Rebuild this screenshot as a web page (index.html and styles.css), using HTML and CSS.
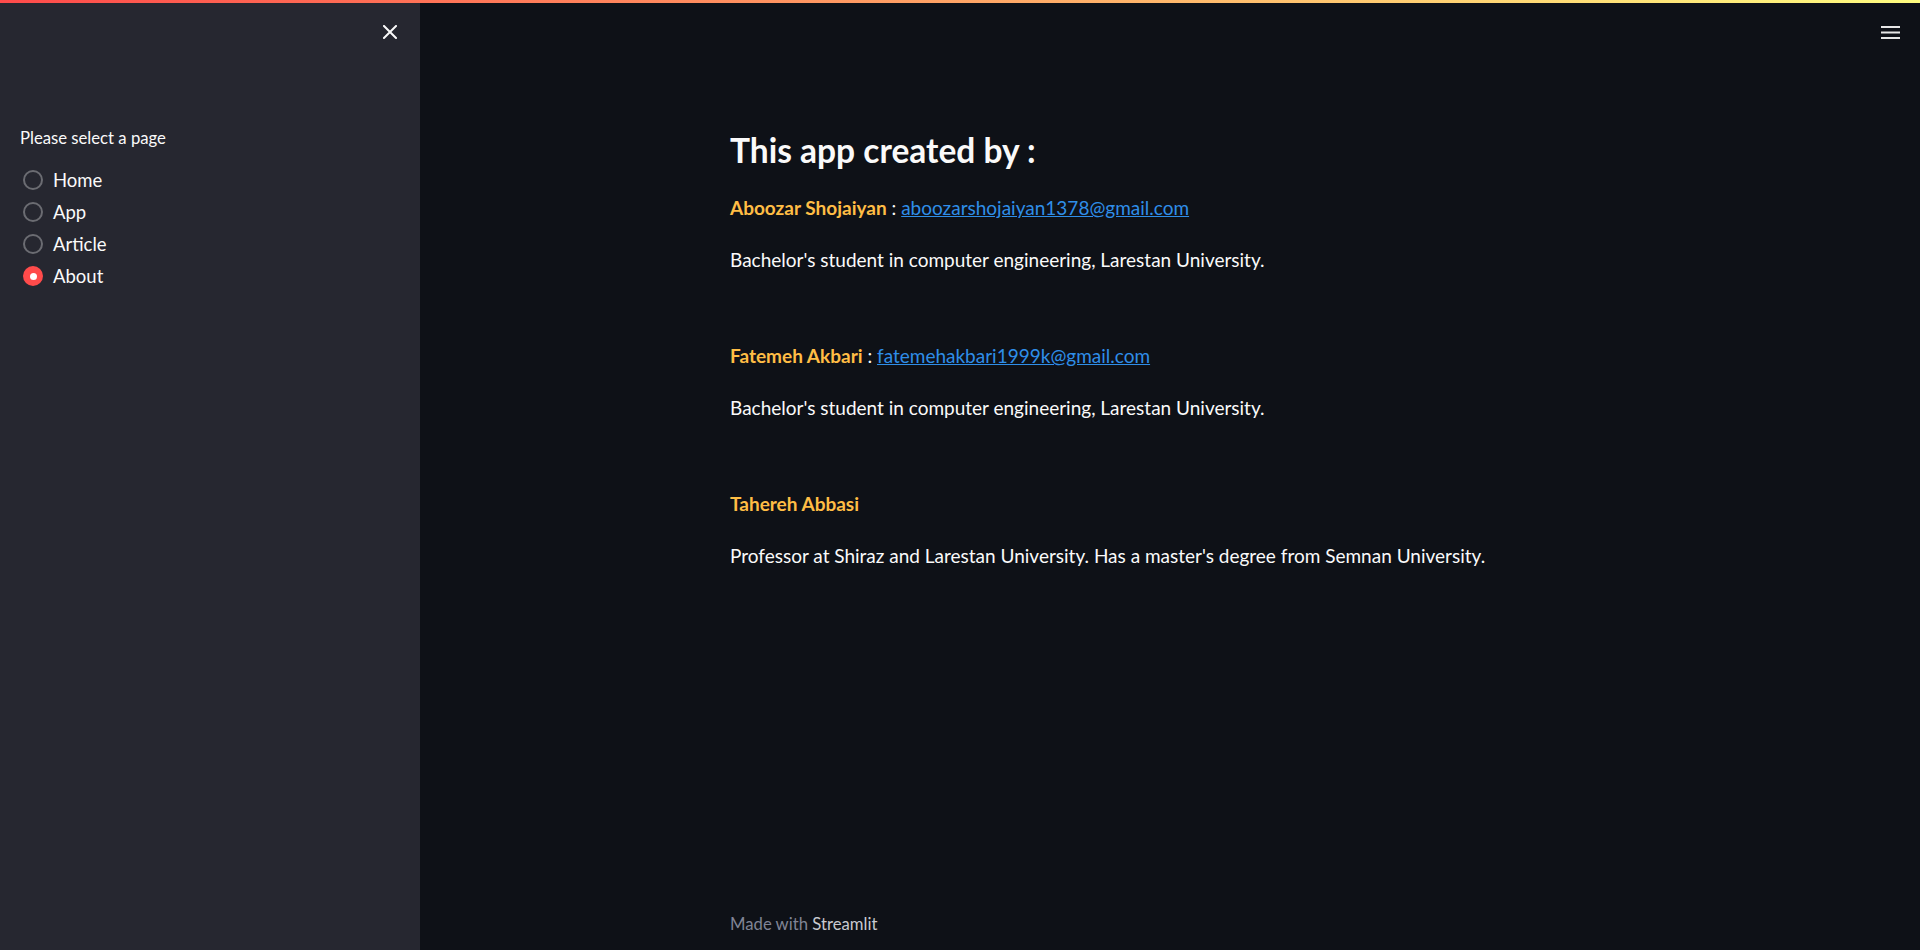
FILE: index.html
```html
<!DOCTYPE html>
<html lang="en">
<head>
<meta charset="utf-8">
<title>About</title>
<link rel="stylesheet" href="styles.css">
</head>
<body>
<div class="decoration"></div>
<div class="app">
  <aside class="sidebar">
    <div class="sb-head">
      <button class="close-btn" aria-label="Close sidebar">
        <svg width="14" height="14" viewBox="0 0 14 14"><path d="M1 1L13 13M13 1L1 13" stroke="#fafafa" stroke-width="2" stroke-linecap="square"/></svg>
      </button>
    </div>
    <div class="sb-body">
      <div class="radio-label">Please select a page</div>
      <div class="radio-group">
        <label class="radio"><span class="dot"></span><span class="txt">Home</span></label>
        <label class="radio"><span class="dot"></span><span class="txt">App</span></label>
        <label class="radio"><span class="dot"></span><span class="txt">Article</span></label>
        <label class="radio checked"><span class="dot"></span><span class="txt">About</span></label>
      </div>
    </div>
  </aside>
  <main class="main">
    <div class="topbar">
      <button class="menu-btn" aria-label="Menu">
        <svg width="19" height="13" viewBox="0 0 19 13"><rect x="0" y="0" width="19" height="2" fill="#e6e6e6"/><rect x="0" y="5.5" width="19" height="2" fill="#e6e6e6"/><rect x="0" y="11" width="19" height="2" fill="#e6e6e6"/></svg>
      </button>
    </div>
    <div class="block">
      <h2 class="title">This app created by :</h2>
      <p class="line"><span class="name">Aboozar Shojaiyan</span> : <a class="mail" href="#">aboozarshojaiyan1378@gmail.com</a></p>
      <p class="line desc">Bachelor's student in computer engineering, Larestan University.</p>
      <p class="line"><span class="name">Fatemeh Akbari</span> : <a class="mail" href="#">fatemehakbari1999k@gmail.com</a></p>
      <p class="line desc">Bachelor's student in computer engineering, Larestan University.</p>
      <p class="line"><span class="name">Tahereh Abbasi</span></p>
      <p class="line desc">Professor at Shiraz and Larestan University. Has a master's degree from Semnan University.</p>
    </div>
    <footer class="footer">Made with <span class="brand">Streamlit</span></footer>
  </main>
</div>
</body>
</html>
```
FILE: styles.css
```css
html, body {
  margin: 0;
  padding: 0;
  height: 100%;
  background: #0e1117;
  font-family: "Lato", "Noto Sans", sans-serif;
  color: #fafafa;
  overflow: hidden;
}
.decoration {
  height: 3px;
  background: linear-gradient(90deg, #ff4b4b, #fffd80);
}
.app {
  display: flex;
  height: 947px;
}
.sidebar {
  width: 420px;
  flex: none;
  background: #262730;
  display: flex;
  flex-direction: column;
}
.sb-head {
  height: 58px;
  display: flex;
  justify-content: flex-end;
  align-items: center;
  padding-right: 23px;
}
.close-btn, .menu-btn {
  background: none;
  border: 0;
  padding: 0;
  display: flex;
  cursor: pointer;
}
.sb-body {
  padding: 67px 20px 0 20px;
}
.radio-label {
  font-size: 16.7px;
  line-height: 20px;
  margin-bottom: 16px;
}
.radio-group {
  display: flex;
  flex-direction: column;
}
.radio {
  display: flex;
  align-items: center;
  height: 32px;
  font-size: 18.5px;
}
.dot {
  width: 20px;
  height: 20px;
  box-sizing: border-box;
  border: 2px solid #6b6c72;
  border-radius: 50%;
  margin-left: 3px;
  margin-right: 10px;
  display: flex;
  align-items: center;
  justify-content: center;
}
.radio.checked .dot {
  border: 0;
  background: #ff4b4b;
}
.radio.checked .dot::after {
  content: "";
  width: 7px;
  height: 7px;
  border-radius: 50%;
  background: #fff;
}
.main {
  flex: 1;
  display: flex;
  flex-direction: column;
}
.topbar {
  height: 58px;
  display: flex;
  justify-content: flex-end;
  align-items: center;
  padding-right: 20px;
}
.block {
  width: 880px;
  margin: 0 auto;
  flex: 1;
  padding-top: 69px;
}
.title {
  margin: 0 0 22px 0;
  font-size: 33.5px;
  font-weight: 700;
  line-height: 40px;
}
.line {
  margin: 0;
  font-size: 19px;
  line-height: 32px;
}
.line + .desc {
  margin-top: 20px;
}
.desc + .line {
  margin-top: 64px;
}
.name {
  color: #ffbd45;
  font-weight: 700;
}
.mail {
  color: #2f8ee8;
  text-decoration: underline;
}
.footer {
  width: 880px;
  margin: 0 auto;
  font-size: 16.7px;
  line-height: 20px;
  padding-bottom: 16px;
  color: #808495;
}
.brand {
  color: #c8c9cf;
}
```
